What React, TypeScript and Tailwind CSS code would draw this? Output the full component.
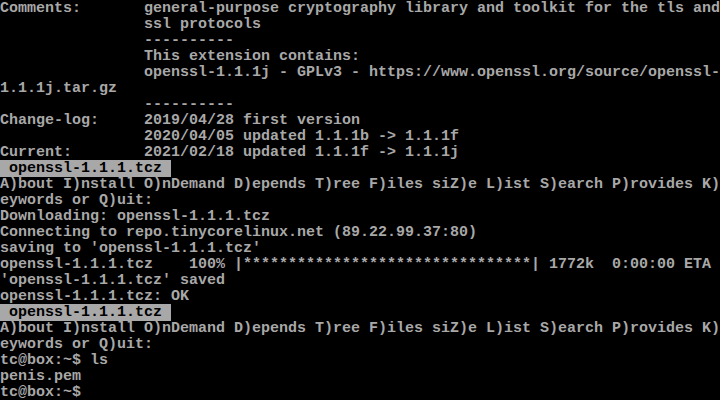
const lines: { text: string; hl?: boolean }[] = [
  { text: 'Comments:       general-purpose cryptography library and toolkit for the tls and' },
  { text: '                ssl protocols' },
  { text: '                ----------' },
  { text: '                This extension contains:' },
  { text: '                openssl-1.1.1j - GPLv3 - https://www.openssl.org/source/openssl-' },
  { text: '1.1.1j.tar.gz' },
  { text: '                ----------' },
  { text: 'Change-log:     2019/04/28 first version' },
  { text: '                2020/04/05 updated 1.1.1b -> 1.1.1f' },
  { text: 'Current:        2021/02/18 updated 1.1.1f -> 1.1.1j' },
  { text: ' openssl-1.1.1.tcz ', hl: true },
  { text: 'A)bout I)nstall O)nDemand D)epends T)ree F)iles siZ)e L)ist S)earch P)rovides K)' },
  { text: 'eywords or Q)uit:' },
  { text: 'Downloading: openssl-1.1.1.tcz' },
  { text: 'Connecting to repo.tinycorelinux.net (89.22.99.37:80)' },
  { text: "saving to 'openssl-1.1.1.tcz'" },
  { text: 'openssl-1.1.1.tcz    100% |********************************| 1772k  0:00:00 ETA' },
  { text: "'openssl-1.1.1.tcz' saved" },
  { text: 'openssl-1.1.1.tcz: OK' },
  { text: ' openssl-1.1.1.tcz ', hl: true },
  { text: 'A)bout I)nstall O)nDemand D)epends T)ree F)iles siZ)e L)ist S)earch P)rovides K)' },
  { text: 'eywords or Q)uit:' },
  { text: 'tc@box:~$ ls' },
  { text: 'penis.pem' },
  { text: 'tc@box:~$ ' },
];

export default function App() {
  return (
    <div className="w-[720px] h-[400px] overflow-hidden bg-black pt-px text-[#a8a8a8] font-['Liberation_Mono',monospace] text-[15px] leading-4 font-bold">
      {lines.map((l, i) => (
        <div key={i} className="h-4 whitespace-pre">
          {l.hl ? <span className="bg-[#a8a8a8] text-black">{l.text}</span> : l.text}
        </div>
      ))}
    </div>
  );
}
